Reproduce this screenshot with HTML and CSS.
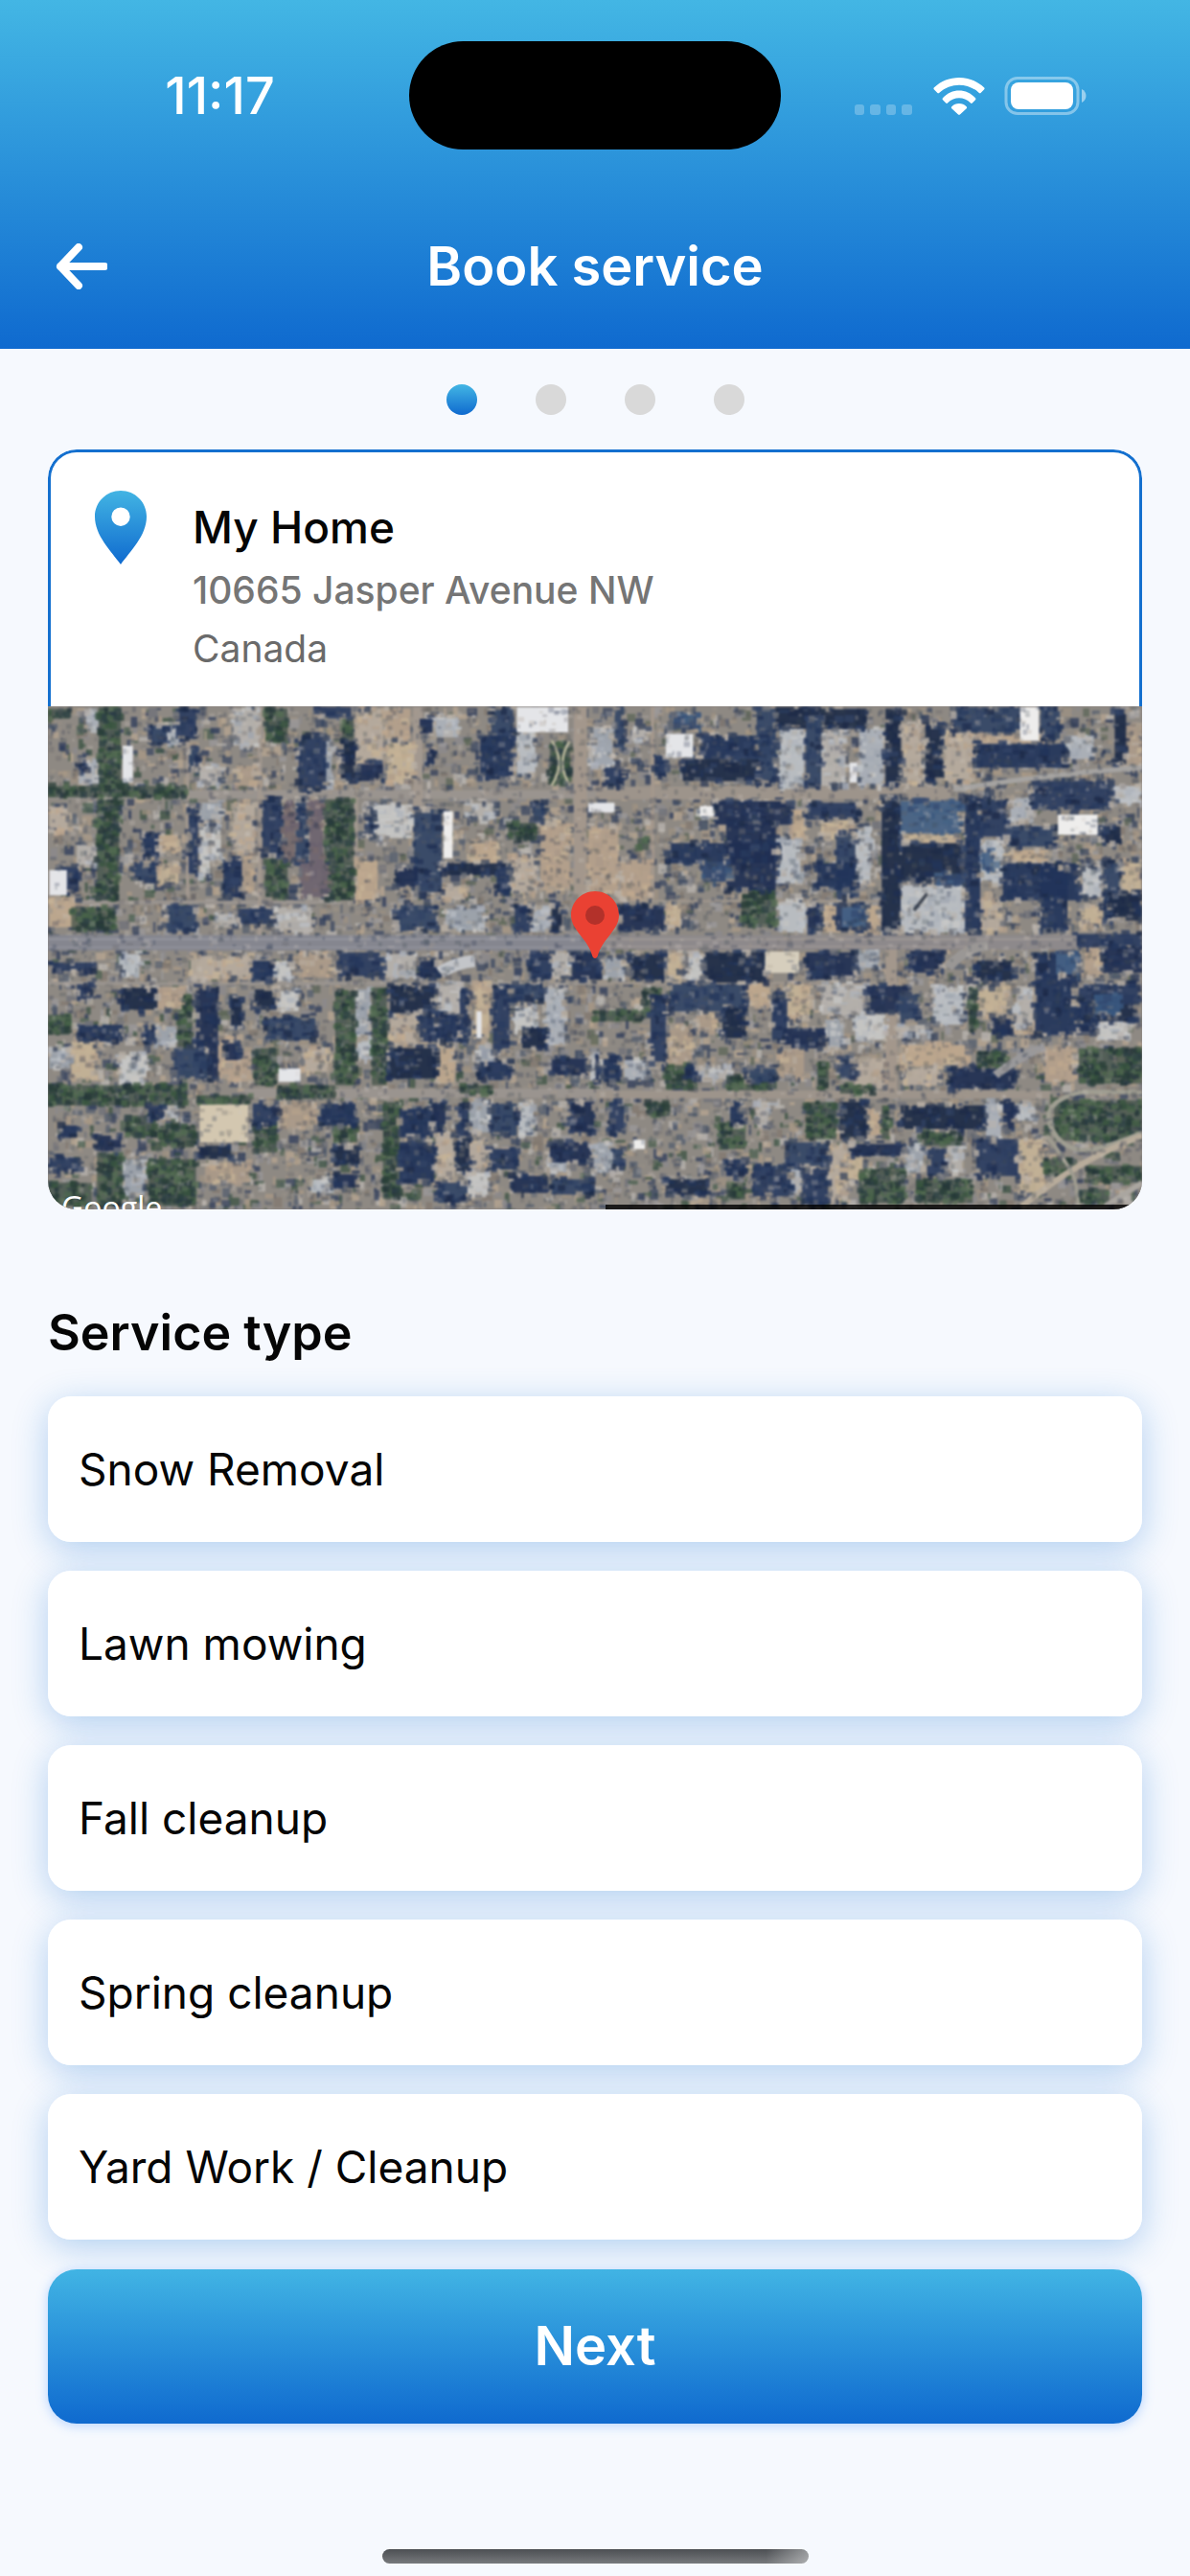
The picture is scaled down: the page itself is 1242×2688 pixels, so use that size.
FILE: index.html
```html
<!DOCTYPE html>
<html lang="en">
  <head>
    <meta charset="utf-8">
    <meta name="viewport" content="width=device-width, initial-scale=1">
    <title>Book service</title>
    <link rel="stylesheet" href="styles.css">
  </head>
  <body>
    <header class="header">
      <div class="status">
        <span class="time">11:17</span>
        <div class="island"></div>
        <svg class="status-icons" width="242" height="40" viewBox="0 0 242 40" fill="#fff">
          <g opacity="0.25">
            <rect x="0" y="29" width="10" height="11" rx="3" />
            <rect x="16" y="29" width="11" height="11" rx="3" />
            <rect x="33" y="29" width="10" height="11" rx="3" />
            <rect x="49" y="29" width="11" height="11" rx="3" />
          </g>
          <path d="M83 13.500a1.500 1.500 0 0 1 0-2.200C97-2.600 121-2.600 135 11.300a1.500 1.500 0 0 1 0 2.200l-3.200 3.200a1.500 1.500 0 0 1-2.200 0C118 6 100 6 88.400 16.700a1.500 1.500 0 0 1-2.200 0z" />
          <path d="M92 22.300C101 11.900 117 11.900 126 22.300a1.500 1.500 0 0 1 0 2l-3 3a1.500 1.500 0 0 1-2.200 0C114 20.600 104 20.600 97.200 27.300a1.500 1.500 0 0 1-2.200 0l-3-3a1.500 1.500 0 0 1 0-2z" />
          <path d="M101.300 31.200a11 11 0 0 1 15.400 0 1.500 1.500 0 0 1 0 2l-6.500 6a1.700 1.700 0 0 1-2.400 0l-6.500-6a1.500 1.500 0 0 1 0-2z" />
          <rect x="158" y="1.500" width="75" height="37" rx="12" fill="none" stroke="#fff" stroke-width="3" opacity="0.4" />
          <rect x="163" y="6" width="65" height="28" rx="8" />
          <path d="M237 13c6 3 6 11 0 14z" opacity="0.5" />
        </svg>
      </div>
      <div class="nav">
        <button type="button" class="back" aria-label="Back">
          <svg width="56" height="48" viewBox="0 0 56 48" fill="none" stroke="#fff" stroke-width="8" stroke-linecap="round" stroke-linejoin="round">
            <path d="M26 4L7 24l19 20M7 24h46" />
          </svg>
        </button>
        <h1>Book service</h1>
      </div>
    </header>

    <main>
      <div class="steps">
        <span class="step active"></span>
        <span class="step"></span>
        <span class="step"></span>
        <span class="step"></span>
      </div>

      <section class="place">
        <div class="place-info">
          <svg class="place-pin" width="54" height="77" viewBox="0 0 54 77">
            <defs>
              <linearGradient id="pinFill" x1="0" y1="0" x2="0" y2="1">
                <stop offset="0" stop-color="#42b4e3" />
                <stop offset="1" stop-color="#0f6acf" />
              </linearGradient>
            </defs>
            <path fill="url(#pinFill)" fill-rule="evenodd" d="M27 0C12 0 0 12 0 27c0 20 17 36 27 50 10-14 27-30 27-50C54 12 42 0 27 0zm0 17.500a9.700 9.700 0 1 1 0 19.400 9.700 9.700 0 0 1 0-19.400z" />
          </svg>
          <div>
            <h3>My Home</h3>
            <p class="street">10665 Jasper Avenue NW</p>
            <p class="country">Canada</p>
          </div>
        </div>
        <div class="map">
          <svg class="aerial" viewBox="0 0 1142 525" preserveAspectRatio="xMidYMid slice">
            <g id="ground"></g>
            <g id="west" transform="translate(-10 -8) scale(0.3827 0.3508)"></g>
            <g id="east" transform="translate(550 -8) scale(0.3954 0.3508)"></g>
            <g id="grain"></g>
          </svg>
          <svg class="marker" width="50" height="70" viewBox="0 0 50 70">
            <path fill="#ea4133" d="M25 0C11 0 0 11 0 25c0 8 4 13 9 20 7 9 11 14 13 22 1 4 5 4 6 0 2-8 6-13 13-22 5-7 9-12 9-20C50 11 39 0 25 0z" />
            <circle cx="25" cy="25" r="10" fill="#b3312a" />
          </svg>
          <span class="credit">Google</span>
          <span class="strip"></span>
        </div>
      </section>

      <h2>Service type</h2>
      <ul class="services">
        <li><button type="button">Snow Removal</button></li>
        <li><button type="button">Lawn mowing</button></li>
        <li><button type="button">Fall cleanup</button></li>
        <li><button type="button">Spring cleanup</button></li>
        <li><button type="button">Yard Work / Cleanup</button></li>
      </ul>
      <button type="button" class="next">Next</button>
    </main>

    <div class="home-bar"></div>
    <script src="map.js"></script>
  </body>
</html>
```
FILE: styles.css
```css
* {
  box-sizing: border-box;
}
body {
  margin: 0;
  min-height: 100vh;
  display: flex;
  flex-direction: column;
  background-color: #f6f9fe;
  color: #050505;
  font-family: Inter, "Liberation Sans", sans-serif;
}
h1,
h2,
h3,
p {
  margin: 0;
}
button {
  border: none;
  font-family: inherit;
  cursor: pointer;
}

.header {
  background: linear-gradient(#43b6e4, #0f6acf);
  color: white;
}
.status {
  display: grid;
  grid-template-columns: 1fr auto 1fr;
  align-items: center;
  justify-items: center;
  padding: 43px 32px 0;
}
.time {
  font-size: 54px;
  font-weight: 500;
}
.island {
  width: 388px;
  height: 113px;
  border-radius: 57px;
  background-color: black;
}
.nav {
  display: grid;
  grid-template-columns: 1fr auto 1fr;
  align-items: center;
  padding: 72px 36px 36px;
}
.nav h1 {
  font-size: 56px;
  line-height: 100px;
  font-weight: 600;
}
.back {
  justify-self: start;
  display: flex;
  padding: 20px;
  background: none;
}

main {
  padding: 0 50px;
}
.steps {
  display: flex;
  justify-content: center;
  gap: 61px;
  padding: 37px 0 36px;
}
.step {
  width: 32px;
  height: 32px;
  border-radius: 50%;
  background-color: #d9d9d9;
}
.step.active {
  background: linear-gradient(#43b6e4, #0f6acf);
}

.place {
  border-radius: 30px;
  overflow: hidden;
}
.place-info {
  display: flex;
  gap: 48px;
  padding: 40px 46px 31px;
  border: 3px solid #1470cf;
  border-bottom: none;
  border-radius: 30px 30px 0 0;
  background-color: white;
}
.place-pin {
  flex: none;
}
.place-info h3 {
  padding-top: 4px;
  font-size: 46px;
  line-height: 68px;
  font-weight: 500;
}
.street {
  font-size: 39px;
  line-height: 64px;
  font-weight: 500;
  color: #757575;
}
.country {
  font-size: 39px;
  line-height: 58px;
  color: #6a6a6a;
}
.map {
  position: relative;
  height: 525px;
  overflow: hidden;
  background-color: #8f8a86;
}
.aerial {
  display: block;
  width: 100%;
  height: 100%;
  filter: blur(1px);
}
.marker {
  position: absolute;
  left: 50%;
  top: 193px;
  margin-left: -25px;
}
.credit {
  position: absolute;
  left: 14px;
  top: 503px;
  font: 32px/40px "Open Sans", sans-serif;
  color: white;
}
.strip {
  position: absolute;
  left: 51%;
  right: 0;
  bottom: 0;
  height: 5px;
  background-color: rgba(0, 0, 0, 0.8);
}

h2 {
  margin: 96px 0 33px;
  font-size: 52px;
  line-height: 66px;
  font-weight: 600;
}
.services {
  display: flex;
  flex-direction: column;
  gap: 30px;
  margin: 0;
  padding: 0;
  list-style: none;
}
.services li {
  border-radius: 24px;
  box-shadow: 0 8px 36px rgba(20, 112, 207, 0.3);
}
.services button {
  position: relative;
  z-index: 1;
  display: block;
  width: 100%;
  padding: 46px 32px;
  border-radius: 24px;
  background-color: white;
  color: #050505;
  font-size: 46px;
  line-height: 60px;
  text-align: left;
}
.next {
  position: relative;
  z-index: 2;
  display: block;
  width: 100%;
  margin-top: 31px;
  padding: 40px;
  border-radius: 30px;
  background: linear-gradient(#41b4e4, #0f6acf);
  box-shadow: 0 2px 12px rgba(60, 140, 255, 0.35);
  color: white;
  font-size: 56px;
  line-height: 81px;
  font-weight: 600;
}
.home-bar {
  width: 445px;
  height: 15px;
  margin: auto auto 13px;
  border-radius: 8px;
  background: linear-gradient(to right, transparent 90%, rgba(255, 255, 255, 0.4)), linear-gradient(#4c4f53, #77797c);
}
```
FILE: map.js
```js
// Aerial map: roads, trees, roofs and shadows as "x,y,w,h" boxes
const NS = "http://www.w3.org/2000/svg";

let seed = 11;
function rand() {
  seed = (seed * 16807) % 2147483647;
  return seed / 2147483647;
}

function pick(list) {
  return list[Math.floor(rand() * list.length)];
}

function box(parent, x, y, w, h, fill, opacity) {
  const r = document.createElementNS(NS, "rect");
  r.setAttribute("x", x);
  r.setAttribute("y", y);
  r.setAttribute("width", w);
  r.setAttribute("height", h);
  r.setAttribute("fill", fill);
  if (opacity) r.setAttribute("opacity", opacity);
  parent.appendChild(r);
}

function path(parent, d, stroke, width) {
  const p = document.createElementNS(NS, "path");
  p.setAttribute("d", d);
  p.setAttribute("fill", "none");
  p.setAttribute("stroke", stroke);
  p.setAttribute("stroke-width", width);
  parent.appendChild(p);
}

function boxes(parent, text, fills, ragged) {
  text.trim().split(/\s+/).forEach((item) => {
    const [x, y, w, h] = item.split(",").map(Number);
    box(parent, x, y, w, h, pick(fills), ragged ? 0.92 : 1);
    if (!ragged) return;
    // bits along the edges and inside, so no box is a clean block
    for (let i = 0; i < (w + h) / 9; i++) {
      const s = 6 + rand() * 18;
      const side = rand() < 0.5;
      const px = side ? x + rand() * w : x + (rand() < 0.5 ? 0 : w);
      const py = side ? y + (rand() < 0.5 ? 0 : h) : y + rand() * h;
      box(parent, px - s / 2, py - s / 2, s, 6 + rand() * 16,
        rand() < 0.5 ? pick(fills) : pick(["#a3988c", "#6c6f78", "#b9b0a6", "#3c4860"]), 0.8);
    }
    for (let i = 0; i < (w * h) / 900; i++) {
      box(parent, x + rand() * w * 0.85, y + rand() * h * 0.85, 6 + rand() * 22, 5 + rand() * 18, pick(fills), 0.7);
    }
  });
}

const SHADOW = ["#1f2f52", "#22345a", "#1c2a47", "#2a3c60", "#334566"];
const LIGHT = ["#bcc0c6", "#adb2bb", "#c9c9c8", "#b6b2ae", "#9da4ae"];
const TAN = ["#bfa88e", "#b5a18c", "#c6b397", "#ab9a89", "#b7ab9e"];
const WHITE = ["#eeedec", "#e4e5e8"];
const BLUE = ["#3a587f", "#456285", "#33496f"];

// leafy areas are built from many small dots so they look ragged
function trees(parent, text) {
  text.trim().split(/\s+/).forEach((item) => {
    const [x, y, w, h] = item.split(",").map(Number);
    box(parent, x, y, w, h, "#3a4d45", 0.7);
    for (let i = 0; i < (w * h) / 160; i++) {
      const s = 7 + rand() * 15;
      box(parent, x + rand() * w - s / 2, y + rand() * h - s / 2, s, s,
        pick(["#2a3f38", "#38543f", "#4a6449", "#243638", "#566d54", "#2d4244"]), 0.75);
    }
  });
}

const ground = document.getElementById("ground");
box(ground, 0, 0, 1142, 525, "#8e8983");
for (let i = 0; i < 8500; i++) {
  const x = rand() * 1142;
  const y = rand() * 525;
  const green = y > 380 || x < 170 ? ["#4b6050", "#3a5142"] : ["#5b6657"];
  box(ground, x, y, 2 + rand() * 9, 2 + rand() * 9,
    pick(["#a99986", "#b8a791", "#8b8a8c", "#6d7078", "#9b9a9b", "#b9b5b0", "#2c3b59", "#3a4760", "#535d6e", "#81786f", "#9d9182"].concat(green)), 0.75);
}

const west = document.getElementById("west");
boxes(west, "26,272,1542,26 26,600,800,12 26,842,1542,10 560,1160,1010,28", ["#9a948f"]);
boxes(west, "598,25,12,700 862,270,10,330 402,25,10,570 1022,25,26,300 1460,25,34,570", ["#a2988f"]);
boxes(west, `540,200,60,60 865,30,75,160 950,130,75,120 945,30,70,90 530,310,60,150 30,590,80,90 415,765,170,70
  710,755,90,75 480,1000,45,130 960,940,75,90 1085,1035,50,110 1085,1290,50,150 1175,1315,45,80 90,1020,65,110
  720,1040,70,70 1370,370,80,200 1190,850,40,160 650,1200,110,80 455,1380,120,60 30,320,50,75 865,480,60,130
  1180,430,70,60 1095,560,70,40 1290,470,70,110 520,480,70,100 520,1060,60,80`, TAN, true);
boxes(west, `530,30,70,110 440,200,60,60 350,80,35,60 110,180,55,75 105,435,55,60 440,310,60,60 440,380,28,150
  472,380,26,110 895,315,125,100 1075,55,70,60 1305,100,50,130 645,620,100,75 485,640,55,40 1110,625,110,65
  1345,615,50,80 640,780,50,60 1400,755,50,80 865,865,40,140 870,1010,40,60 1090,850,60,90 1385,860,50,170
  1300,915,55,70 650,870,60,60 320,975,55,55 220,1060,75,90 30,1045,55,55 230,1370,60,110 740,1430,60,40
  1170,1410,55,65 1175,1200,55,90 1310,1200,40,100 1390,1350,50,60 340,1200,40,50 940,760,90,70 230,760,45,70
  1200,1030,35,50 1505,1060,30,75 130,40,35,50 780,120,20,140 1500,130,68,70 1170,310,80,50`, LIGHT, true);
trees(west, `165,25,60,240 26,260,380,34 160,300,60,300 780,300,80,300 810,870,55,280 910,860,40,290 26,1150,380,60
  590,1040,60,110 650,1150,160,40 160,1350,70,160 330,1270,100,60 940,1200,45,290 380,880,40,160 1395,130,55,125
  300,1370,130,140 26,30,60,30 830,60,30,120 620,30,60,100 90,620,120,70 590,1260,60,90 810,1260,60,60
  430,1180,150,25 1150,1150,90,25 26,940,60,60 1280,370,80,50 240,1240,80,60 26,1440,120,70 620,480,60,110`);
boxes(west, `375,30,55,90 305,80,45,60 710,110,75,160 760,25,105,30 825,125,40,120 870,195,70,50 1235,25,60,100
  1205,110,90,130 1040,60,35,55 612,300,52,170 702,300,35,190 410,320,25,210 255,490,90,50 285,400,50,70
  505,480,50,110 1025,330,75,255 975,500,60,60 1105,490,180,35 1250,500,35,80 50,500,60,75 350,615,80,80
  545,625,95,45 975,615,110,75 1300,615,40,80 1400,615,28,80 1340,755,60,80 1455,755,80,80 820,755,120,70
  1040,780,50,50 585,780,55,60 30,785,120,25 105,850,40,50 225,860,110,65 430,860,60,270 370,1040,90,90
  110,970,120,50 590,865,60,60 620,950,135,65 960,855,120,80 1040,930,50,90 1085,940,80,80 1150,870,20,150
  1240,860,45,190 1290,850,90,50 1320,980,65,60 955,1040,130,90 1200,1080,90,55 1400,1070,100,50 585,1205,65,65
  770,1205,95,65 985,1220,100,85 985,1320,95,120 1075,1200,35,90 1235,1205,70,95 1450,1200,65,90 1140,1320,35,85
  1230,1340,75,60 1395,1320,115,60 430,1330,95,40 26,1365,90,40 155,1300,70,45 805,1330,70,55 800,1415,70,40
  1290,1420,100,50 1400,1430,110,45 1090,1440,80,60 300,1210,40,40 510,1025,38,50 525,890,30,90 110,180,20,35
  410,150,25,60 900,330,15,80 1350,310,30,50 1145,1210,28,90 60,1270,45,35 290,970,28,60 1060,150,20,45`, SHADOW, true);
boxes(west, "670,310,30,170 740,300,36,200 715,490,75,100", ["#6e6470", "#776a6c"], true);
boxes(west, "1305,25,140,75 230,140,28,110 1105,335,25,140 30,510,48,75 655,1100,60,40 1195,930,14,80 1500,310,68,28", WHITE);
boxes(west, "440,1208,132,112", ["#d3c7b0"]);
path(west, "M1400 125Q1440 190 1400 258M1450 125Q1410 190 1450 258", "#b9b79c", 7);
boxes(west, "325,858,66,66 328,405,52,56 328,490,54,66", TAN, true);
path(west, "M1095 815Q1140 785 1190 780", "#c3c5c9", 36);
boxes(west, "26,703,1542,46", ["#85868f"]);
boxes(west, "26,714,1542,4 26,738,1542,3", ["#999aa2"]);

const east = document.getElementById("east");
boxes(east, "55,262,950,38 55,1166,1200,24 55,842,800,9 55,598,760,8", ["#9d948b"]);
boxes(east, "0,25,32,570 200,25,10,570 820,700,30,470", ["#a3978c"]);
boxes(east, `865,80,50,175 975,80,75,170 1060,105,200,28 120,480,80,120 240,610,40,75 655,615,150,80 570,330,35,90
  650,360,80,60 450,840,65,75 1065,860,75,85 245,975,65,120 320,940,50,60 540,1040,65,90 740,1070,80,90
  780,1230,25,80 245,755,35,80 1070,600,60,90 1330,620,70,60 1440,480,55,90 860,1030,180,60 865,1100,100,50
  1160,960,60,40 1345,730,45,100 1170,1310,70,160 670,1330,50,160 710,1360,50,80 560,850,60,100 1450,80,50,120
  1140,450,110,35 860,405,150,25 35,380,80,200 1240,1040,80,100`, TAN, true);
boxes(east, `540,90,65,170 650,90,65,170 750,90,65,170 1300,110,70,70 150,85,45,40 330,320,38,35 455,305,40,50
  860,555,170,140 740,390,40,160 1065,420,65,120 1340,500,50,90 535,420,60,130 540,605,70,90 740,740,65,60
  650,850,120,90 740,940,80,75 660,955,50,90 1165,855,45,120 860,970,75,30 330,1090,80,50 130,1075,60,60
  1165,1205,50,50 1085,1200,40,110 480,1200,35,70 870,1330,50,80 980,1330,45,80 570,1390,30,80 50,1320,50,90
  1150,295,60,70 1420,260,80,50 1380,955,80,60 80,770,50,60 300,760,40,80 50,90,50,110 945,860,80,110`, LIGHT, true);
trees(east, `440,570,90,110 240,1090,70,70 400,1120,120,45 610,1200,80,110 640,1080,30,80 1330,1040,170,105
  1265,1195,235,120 1350,1390,150,50 1330,1460,80,40 380,1260,70,80 920,1290,100,40 750,1400,120,100 165,415,30,35
  1060,1050,80,60 900,1430,150,70 1040,860,20,130 180,860,50,90 810,1210,20,100 190,1200,60,40 400,1440,50,50
  50,930,130,30 700,1150,90,25 1240,1370,70,50`);
boxes(east, `330,110,200,70 480,30,50,220 285,180,200,65 530,25,120,65 650,30,120,60 610,60,40,200 820,30,40,225
  925,80,45,165 1000,25,175,75 1060,135,235,70 1230,25,50,100 1425,25,30,170 210,170,30,60 80,205,50,55
  105,25,25,130 1205,245,210,85 370,305,200,70 610,310,140,50 245,430,290,60 400,370,130,200 690,400,50,190
  640,490,100,80 810,295,50,400 860,430,160,110 1030,295,40,400 1070,300,70,110 1140,380,130,60 1130,490,200,110
  1230,500,70,190 1395,490,45,170 1410,580,88,80 115,615,120,75 690,615,80,75 615,610,30,80 55,765,15,60
  145,760,90,75 340,755,165,90 610,755,130,80 880,750,90,65 1060,780,100,60 1215,760,120,240 1320,700,178,40
  1395,740,103,75 250,850,200,80 200,890,40,200 520,880,40,140 550,980,110,60 770,855,110,80 1370,880,110,80
  1320,850,170,60 1330,900,40,100 390,920,60,90 55,1060,8,80 75,1060,45,80 1100,950,50,50 990,1100,170,60
  860,1210,220,70 700,1200,70,110 410,1200,35,70 1060,1310,110,110 560,1320,110,70 470,1390,100,90 600,1400,68,105
  730,1325,140,35 930,1340,45,80 90,1200,40,90 240,1430,110,45 390,1370,60,50 290,1095,35,35 450,1100,80,40
  700,1060,35,70 855,880,50,80 100,1340,28,50 1130,1200,30,80 1390,380,50,50`, SHADOW, true);
boxes(east, "860,305,160,95 330,485,80,60 260,50,70,40 1270,760,60,60 1370,880,70,60 705,620,55,60 1075,455,30,55 960,520,70,35", BLUE, true);
boxes(east, "240,105,72,70 1175,25,50,100 55,310,50,28 1275,345,105,60 155,1312,30,28 330,320,36,30 725,190,20,60", WHITE);
boxes(east, "502,752,90,64", ["#d6cebd"]);
path(east, "M895 630L930 580", "#3f4652", 9);
boxes(east, "55,704,1270,42", ["#8d898b"]);
boxes(east, "55,714,1270,4 55,736,1000,3", ["#a39c98"]);
path(east, "M985 800Q1030 740 1090 735", "#9a9795", 28);
path(east, "M1000 270Q1250 225 1498 205", "#a5a3a1", 15);
path(east, "M1498 1170H1340Q1250 1190 1250 1250Q1270 1340 1350 1345Q1420 1330 1498 1290", "#a09e92", 13);
path(east, "M1180 1510Q1330 1370 1498 1300", "#b8ac9b", 18);
path(east, "M1330 1510L1320 1430Q1290 1360 1245 1300", "#9f9c90", 10);
path(east, "M1110 1120Q1180 1060 1240 1035", "#9a999b", 24);
path(east, "M1400 1510L1498 1440", "#aaa6a0", 16);

// cars, vents and other small marks
const grain = document.getElementById("grain");
for (let i = 0; i < 7500; i++) {
  box(grain, rand() * 1142, rand() * 525, 2 + rand() * 5, 2 + rand() * 4,
    pick(["#1f2b45", "#cfcac3", "#5c5d60", "#a8998a", "#3c4a52", "#24334f"]), 0.26);
}
```
